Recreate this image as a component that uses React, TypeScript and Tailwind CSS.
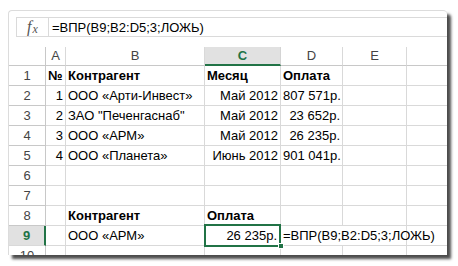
import React from "react";

const COLS = "grid-cols-[37px_20px_139px_76px_62px_64px_64px]";

type Cell = { text?: string; bold?: boolean; right?: boolean };

const ROWS: Cell[][] = [
  [{ text: "№", bold: true }, { text: "Контрагент", bold: true }, { text: "Месяц", bold: true }, { text: "Оплата", bold: true }, {}, {}],
  [{ text: "1", right: true }, { text: "ООО «Арти-Инвест»" }, { text: "Май 2012", right: true }, { text: "807 571р.", right: true }, {}, {}],
  [{ text: "2", right: true }, { text: "ЗАО \"Печенгаснаб\"" }, { text: "Май 2012", right: true }, { text: "23 652р.", right: true }, {}, {}],
  [{ text: "3", right: true }, { text: "ООО «АРМ»" }, { text: "Май 2012", right: true }, { text: "26 235р.", right: true }, {}, {}],
  [{ text: "4", right: true }, { text: "ООО «Планета»" }, { text: "Июнь 2012", right: true }, { text: "901 041р.", right: true }, {}, {}],
  [{}, {}, {}, {}, {}, {}],
  [{}, {}, {}, {}, {}, {}],
  [{}, { text: "Контрагент", bold: true }, { text: "Оплата", bold: true }, {}, {}, {}],
];

function DataCell({ cell }: { cell: Cell }) {
  return (
    <div
      className={`h-[20px] border-r border-b border-[#d9d9d9] leading-[19px] px-[2px] whitespace-nowrap overflow-hidden text-black ${
        cell.bold ? "font-bold" : ""
      } ${cell.right ? "text-right" : "text-left"}`}
    >
      {cell.text}
    </div>
  );
}

function RowHead({ n, active }: { n: number; active?: boolean }) {
  return active ? (
    <div className="h-[20px] border-b border-[#d9d9d9] border-r-2 border-r-[#217346] bg-[#e1e1e1] text-center leading-[19px] font-bold text-[#217346]">
      {n}
    </div>
  ) : (
    <div className="h-[20px] border-r border-b border-[#c8c8c8] text-center leading-[19px] text-[#444]">{n}</div>
  );
}

export default function App() {
  return (
    <div className="w-[458px] h-[266px] bg-white pl-2 pt-[10px]">
      <div
        className="w-[439px] h-[245px] bg-white border-l border-t border-[#dcdcdc] rounded-tl-[4px] rounded-tr-[4px] shadow-[4px_4px_3px_rgba(0,0,0,0.7)] overflow-hidden text-[13px]"
        style={{ fontFamily: '"Liberation Sans", Arial, sans-serif' }}
      >
        {/* Formula bar */}
        <div className="mt-[6px] ml-[7px] h-[20px] flex border-y border-[#dadada]">
          <div className="w-[33px] border-x border-[#dadada] flex items-center justify-center text-[#555] italic" style={{ fontFamily: '"Liberation Serif", serif' }}>
            <span className="text-[16px] leading-none">f</span>
            <span className="text-[12px] leading-none mt-[4px] ml-[1px]">x</span>
          </div>
          <div className="flex-1 pl-[3px] pt-[1px] leading-[18px] text-black">=ВПР(B9;B2:D5;3;ЛОЖЬ)</div>
        </div>

        {/* Sheet */}
        <div className={`mt-[10px] grid ${COLS}`}>
          {/* column headers */}
          <div className="h-[19px] border-r border-b border-[#c8c8c8]" />
          {["A", "B", "C", "D", "E", ""].map((c) =>
            c === "C" ? (
              <div key={c} className="h-[19px] bg-[#e1e1e1] border-r border-[#d4d4d4] border-b-2 border-b-[#217346] text-center leading-[18px] font-bold text-[#217346]">
                C
              </div>
            ) : (
              <div key={c || "F"} className="h-[19px] border-r border-b border-r-[#d9d9d9] border-b-[#c8c8c8] text-center leading-[18px] text-[#444]">
                {c}
              </div>
            )
          )}

          {ROWS.map((row, i) => (
            <React.Fragment key={i}>
              <RowHead n={i + 1} />
              {row.map((cell, j) => (
                <DataCell key={j} cell={cell} />
              ))}
            </React.Fragment>
          ))}

          {/* row 9 */}
          <RowHead n={9} active />
          <DataCell cell={{}} />
          <DataCell cell={{ text: "ООО «АРМ»" }} />
          <div className="relative h-[20px] border-r border-b border-[#d9d9d9] leading-[19px] px-[3px] text-right text-black">
            26 235р.
            <div className="absolute left-[-1px] top-[-2px] w-[77px] h-[23px] border-2 border-[#217346] z-10" />
            <div className="absolute right-[-4px] bottom-[-4px] w-[6px] h-[6px] bg-[#217346] border border-white z-20" />
          </div>
          <div className="col-span-2 h-[20px] border-r border-b border-[#d9d9d9] leading-[19px] pl-[2px] whitespace-nowrap text-black">
            =ВПР(B9;B2:D5;3;ЛОЖЬ)
          </div>
          <DataCell cell={{}} />

          {/* row 10 */}
          <RowHead n={10} />
          {[0, 1, 2, 3, 4, 5].map((j) => (
            <DataCell key={j} cell={{}} />
          ))}
        </div>
      </div>
    </div>
  );
}
